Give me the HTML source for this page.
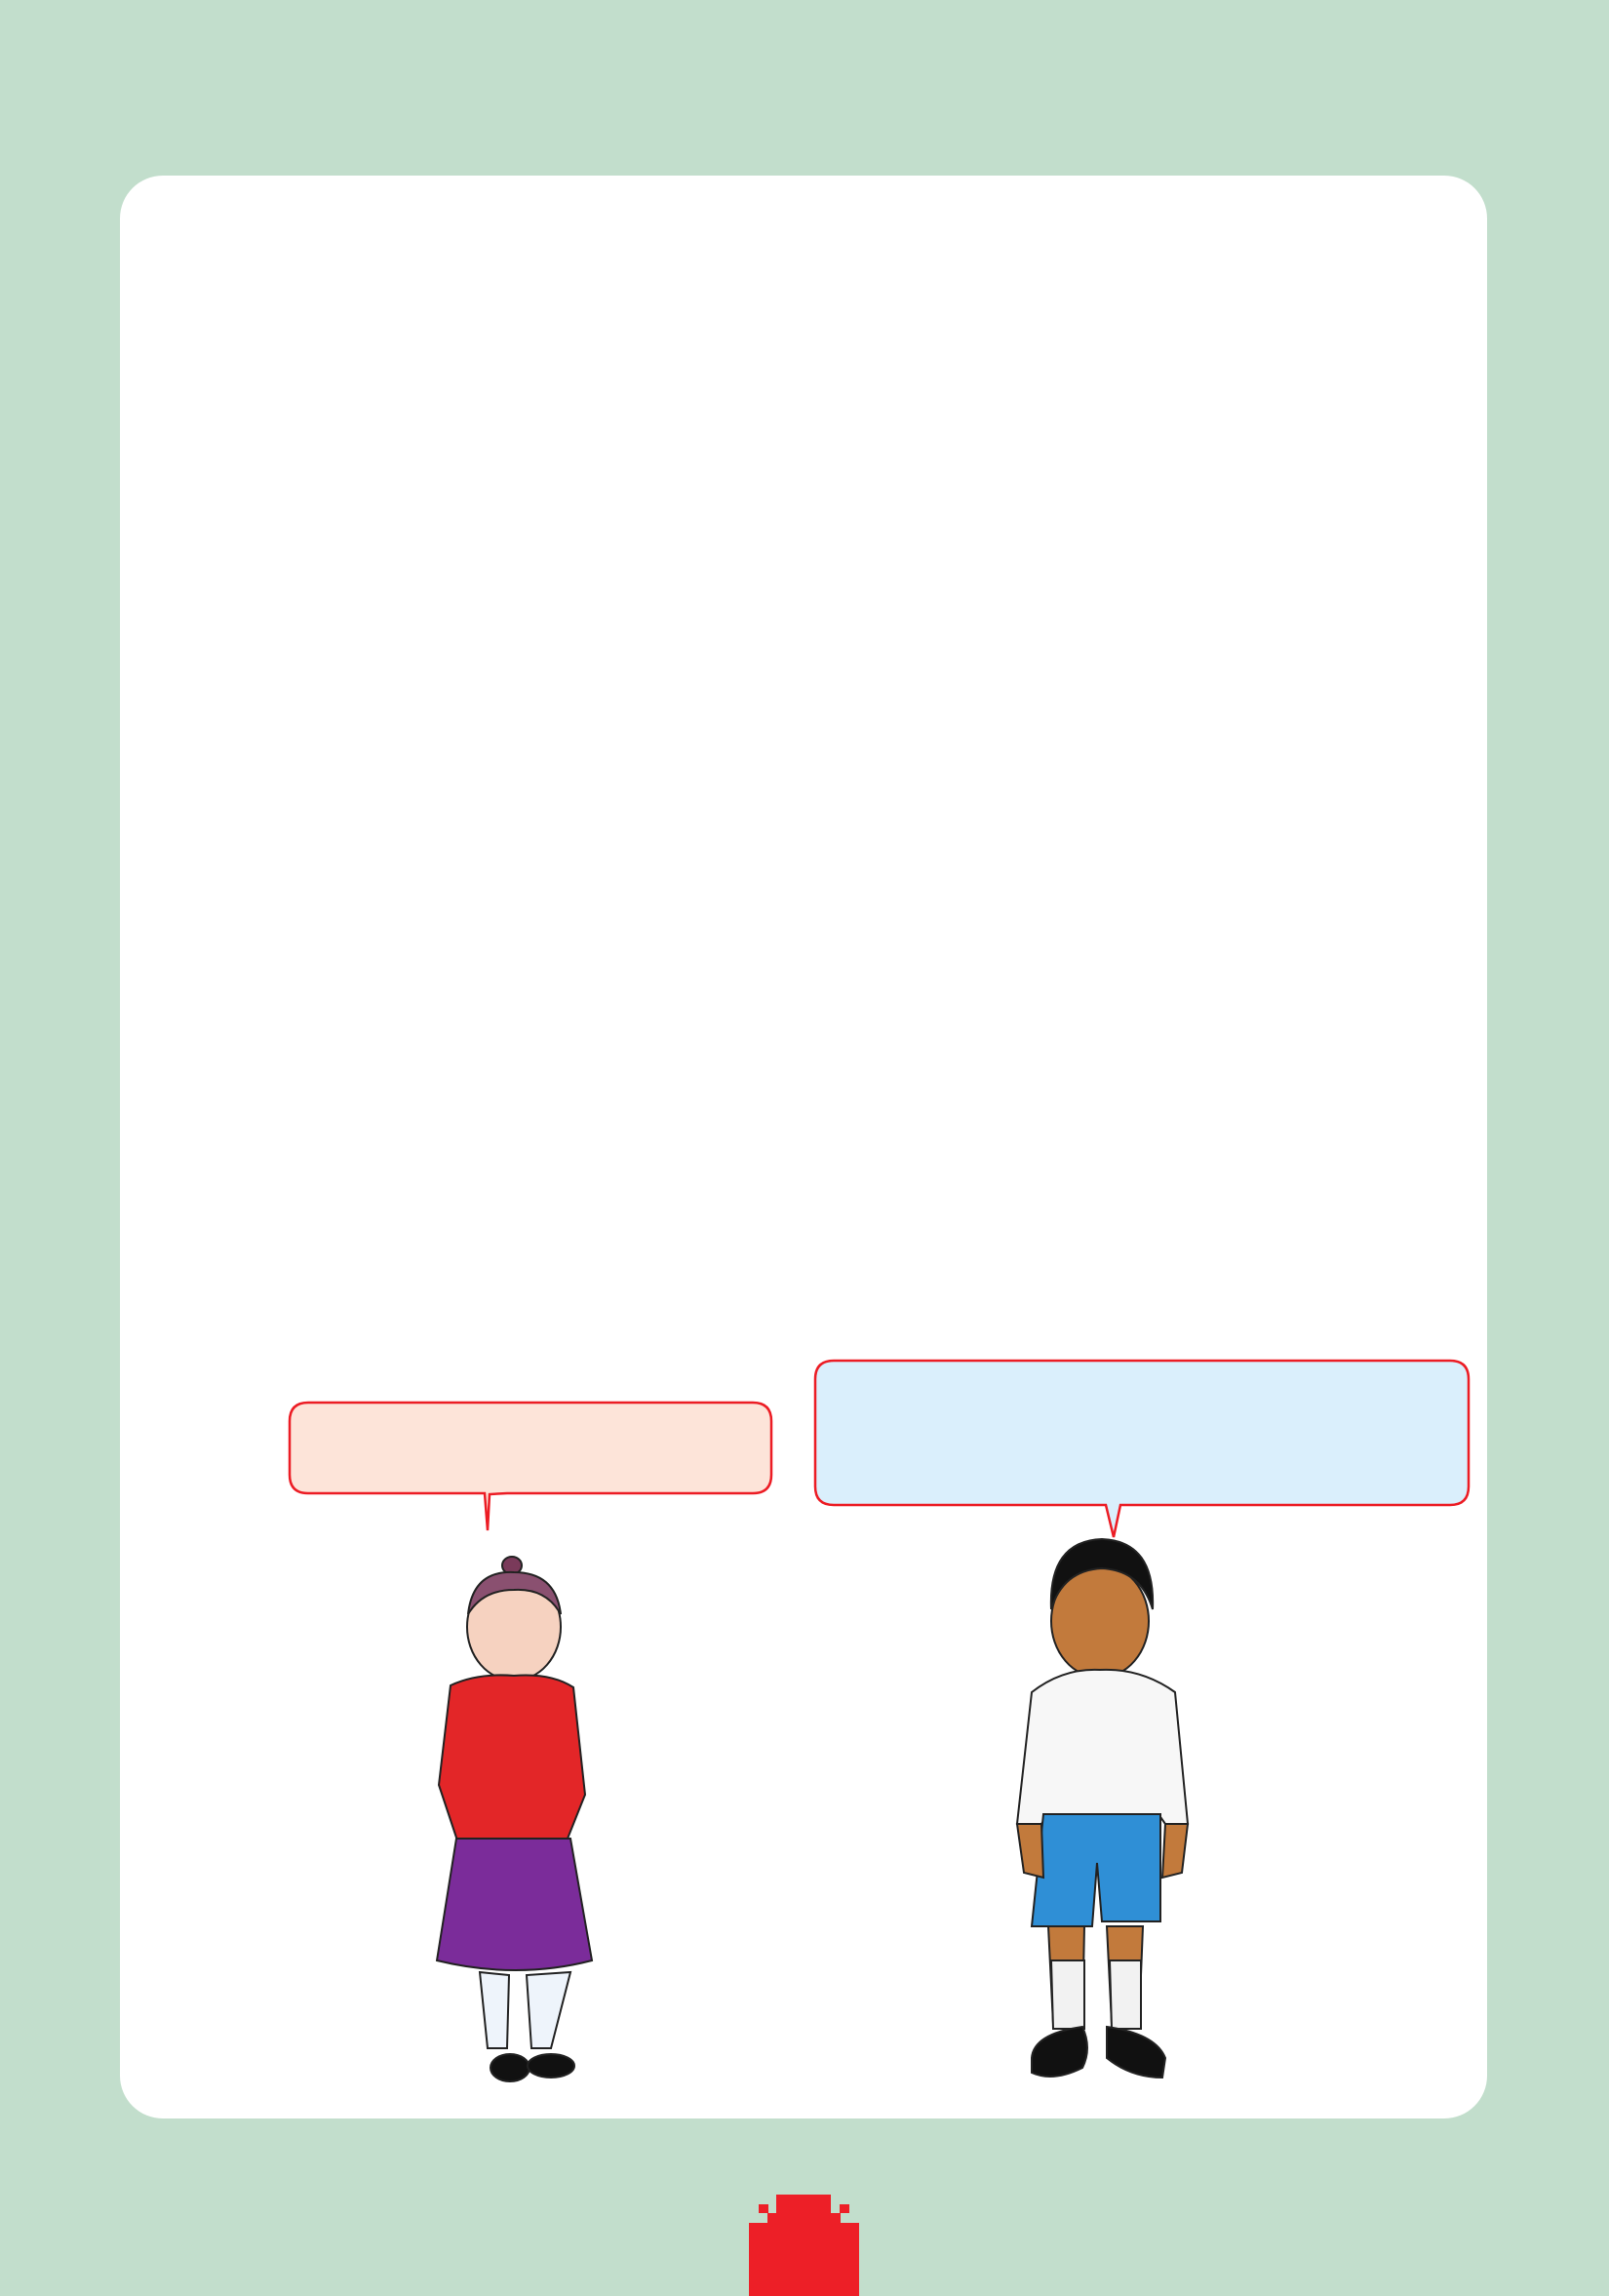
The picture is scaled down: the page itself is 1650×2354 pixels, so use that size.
<!DOCTYPE html>
<html><head><meta charset="utf-8"><style>
html,body{margin:0;padding:0}
body{width:1650px;height:2354px;background:#c2decc;position:relative;overflow:hidden;font-family:"Liberation Sans",sans-serif}
.card{position:absolute;left:123px;top:180px;width:1402px;height:1992px;background:#fff;border-radius:44px}
svg{position:absolute;left:0;top:0}
</style></head><body>
<div class="card"></div>
<svg width="1650" height="2354" viewBox="0 0 1650 2354">
<!-- bubbles -->
<path d="M316 1438 H772 Q791 1438 791 1457 V1512 Q791 1531 772 1531 H520 L502 1532 L500 1569 L497 1531 H316 Q297 1531 297 1512 V1457 Q297 1438 316 1438 Z" fill="#fde4d9" stroke="#ec1c24" stroke-width="2.5"/>
<path d="M855 1395 H1487 Q1506 1395 1506 1414 V1524 Q1506 1543 1487 1543 H1149 L1142 1576 L1134 1543 H855 Q836 1543 836 1524 V1414 Q836 1395 855 1395 Z" fill="#daeffc" stroke="#ec1c24" stroke-width="2.5"/>
<!-- girl -->
<g stroke="#222" stroke-width="2">
<ellipse cx="525" cy="1605" rx="10" ry="9" fill="#7a3a5a"/>
<ellipse cx="527" cy="1668" rx="48" ry="55" fill="#f6d2c0"/>
<path d="M480 1655 Q485 1610 527 1612 Q570 1612 575 1655 Q560 1628 527 1630 Q495 1630 480 1655Z" fill="#8a5070"/>
<path d="M462 1728 Q490 1715 527 1718 Q565 1715 588 1730 L600 1840 L580 1890 H470 L450 1830 Z" fill="#e32628"/>
<path d="M468 1885 H585 L607 2010 Q530 2030 448 2010 Z" fill="#7b2c9a"/>
<path d="M492 2022 L500 2100 H520 L522 2025 Z M540 2025 L545 2100 H565 L585 2022 Z" fill="#eef4fb"/>
<ellipse cx="523" cy="2120" rx="20" ry="14" fill="#111"/>
<ellipse cx="565" cy="2118" rx="24" ry="12" fill="#111"/>
</g>
<!-- boy -->
<g stroke="#222" stroke-width="2">
<ellipse cx="1128" cy="1662" rx="50" ry="58" fill="#c27a3c"/>
<path d="M1078 1650 Q1075 1580 1130 1578 Q1185 1580 1182 1650 Q1170 1610 1130 1608 Q1090 1610 1078 1650Z" fill="#111"/>
<path d="M1058 1735 Q1090 1710 1128 1712 Q1170 1710 1205 1735 L1218 1870 L1195 1870 L1188 1860 H1075 L1068 1870 L1043 1870 Z" fill="#f7f7f7"/>
<path d="M1070 1860 H1190 L1190 1970 H1130 L1125 1910 L1120 1975 H1058 Z" fill="#2f8fd6"/>
<path d="M1043 1870 H1068 L1070 1925 L1050 1920 Z M1195 1870 H1218 L1212 1920 L1192 1925 Z" fill="#c27a3c"/>
<path d="M1075 1975 L1080 2075 H1110 L1112 1975 Z M1135 1975 L1140 2075 H1168 L1172 1975 Z" fill="#c27a3c"/>
<path d="M1078 2010 H1112 V2080 H1080 Z M1138 2010 H1170 V2080 H1140 Z" fill="#f2f2f2"/>
<path d="M1058 2110 Q1060 2085 1110 2078 Q1120 2100 1110 2120 Q1080 2135 1058 2125Z" fill="#111"/>
<path d="M1135 2078 Q1185 2085 1195 2110 L1192 2130 Q1160 2130 1135 2110Z" fill="#111"/>
</g>
<!-- red shape -->
<g fill="#ed1f27">
<rect x="768" y="2279" width="113" height="75"/>
<rect x="787" y="2269" width="75" height="12"/>
<rect x="796" y="2250" width="56" height="20"/>
<rect x="778" y="2260" width="10" height="9"/>
<rect x="861" y="2260" width="10" height="9"/>
</g>
</svg>
</body></html>
